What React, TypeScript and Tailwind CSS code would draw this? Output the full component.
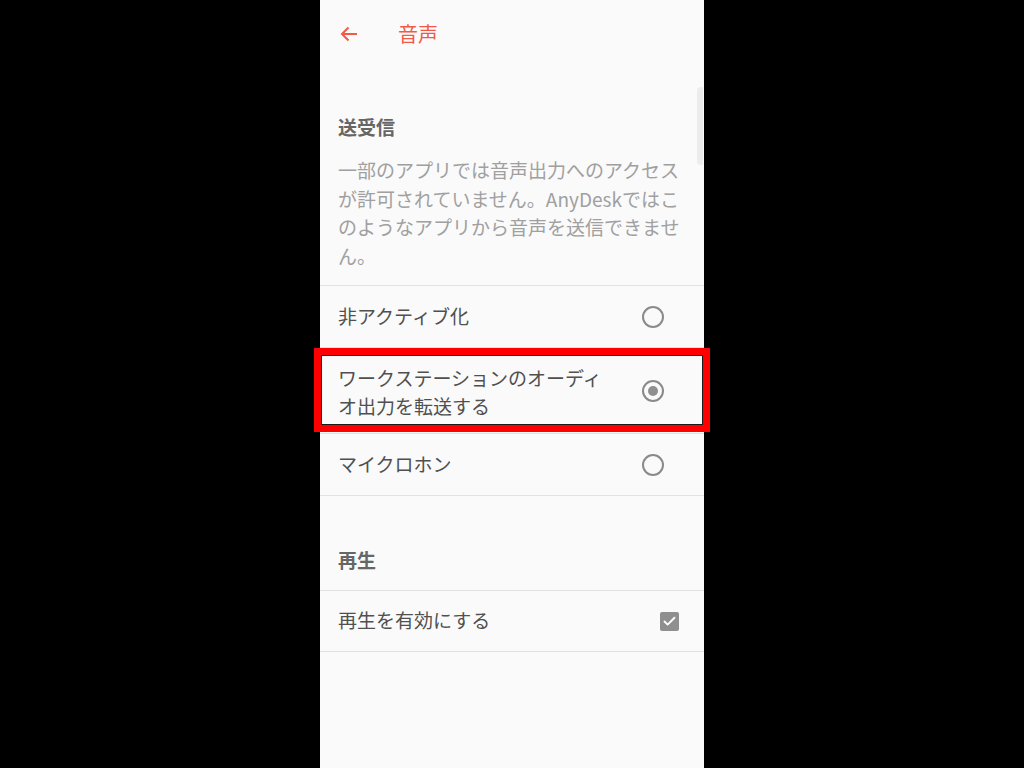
import { Check } from 'lucide-react';

const font = { fontFamily: '"Noto Sans CJK JP", "Noto Sans", sans-serif' };

function Radio({ checked }: { checked?: boolean }) {
  return (
    <div className="w-[22px] h-[22px] rounded-full border-2 border-[#8a8a8a] flex items-center justify-center">
      {checked && <div className="w-[10px] h-[10px] rounded-full bg-[#8f8f8f]" />}
    </div>
  );
}

export default function App() {
  return (
    <div className="min-h-screen bg-black flex justify-center" style={font}>
      <div className="relative w-[384px] h-[768px] bg-[#fafafa]">
        {/* scrollbar */}
        <div className="absolute right-[1px] top-[87px] w-[6px] h-[78px] rounded-l-[4px] bg-[#ececec]" />

        <div className="h-[68px] flex items-center pl-[20px]">
          <svg width="18" height="16" viewBox="0 0 18 16" fill="none" stroke="#f15a46" strokeWidth="2">
            <path d="M17 8H2" />
            <path d="M8.5 1.5 2 8l6.5 6.5" />
          </svg>
          <span className="ml-[40px] text-[20px] leading-[28px] text-[#f15a46]">音声</span>
        </div>

        <div className="px-[18px] pt-[46px]">
          <div className="text-[19px] leading-[26px] font-bold text-[#666666]">送受信</div>
          <p className="mt-[16px] pb-[15px] text-[19px] leading-[28.6px] text-[#a0a0a0] whitespace-nowrap">
            一部のアプリでは音声出力へのアクセス<br />
            が許可されていません。AnyDeskではこ<br />
            のようなアプリから音声を送信できませ<br />
            ん。
          </p>
        </div>

        <div className="border-t border-[#e2e2e2]">
          <div className="h-[62px] px-[18px] flex items-center justify-between border-b border-[#e2e2e2]">
            <span className="text-[19px] text-[#505050] pb-[2px]">非アクティブ化</span>
            <div className="mr-[22px]"><Radio /></div>
          </div>

          <div className="relative h-[86px] px-[18px] flex items-center justify-between border-b border-[#e2e2e2]">
            <span className="w-[275px] text-[19px] leading-[28px] text-[#505050] pt-[3px]">
              ワークステーションのオーディオ出力を転送する
            </span>
            <div className="mr-[22px]"><Radio checked /></div>
            <div className="absolute -left-[6px] top-0 w-[396px] h-[84px] border-[7px] border-[#ff0000]">
              <div className="w-full h-full border-[1.5px] border-[#1a1a1a]" />
            </div>
          </div>

          <div className="h-[62px] px-[18px] flex items-center justify-between border-b border-[#e2e2e2]">
            <span className="text-[19px] text-[#505050] pb-[2px]">マイクロホン</span>
            <div className="mr-[22px]"><Radio /></div>
          </div>
        </div>

        <div className="px-[18px] pt-[51px] pb-[17px] border-b border-[#e2e2e2]">
          <div className="text-[19px] leading-[26px] font-bold text-[#666666]">再生</div>
        </div>

        <div className="h-[61px] px-[18px] flex items-center justify-between border-b border-[#e2e2e2]">
          <span className="text-[19px] text-[#505050] pb-[2px]">再生を有効にする</span>
          <div className="mr-[7px] w-[19px] h-[19px] rounded-[2px] bg-[#8f8f8f] flex items-center justify-center">
            <Check size={15} strokeWidth={3} color="#ffffff" />
          </div>
        </div>
      </div>
    </div>
  );
}
